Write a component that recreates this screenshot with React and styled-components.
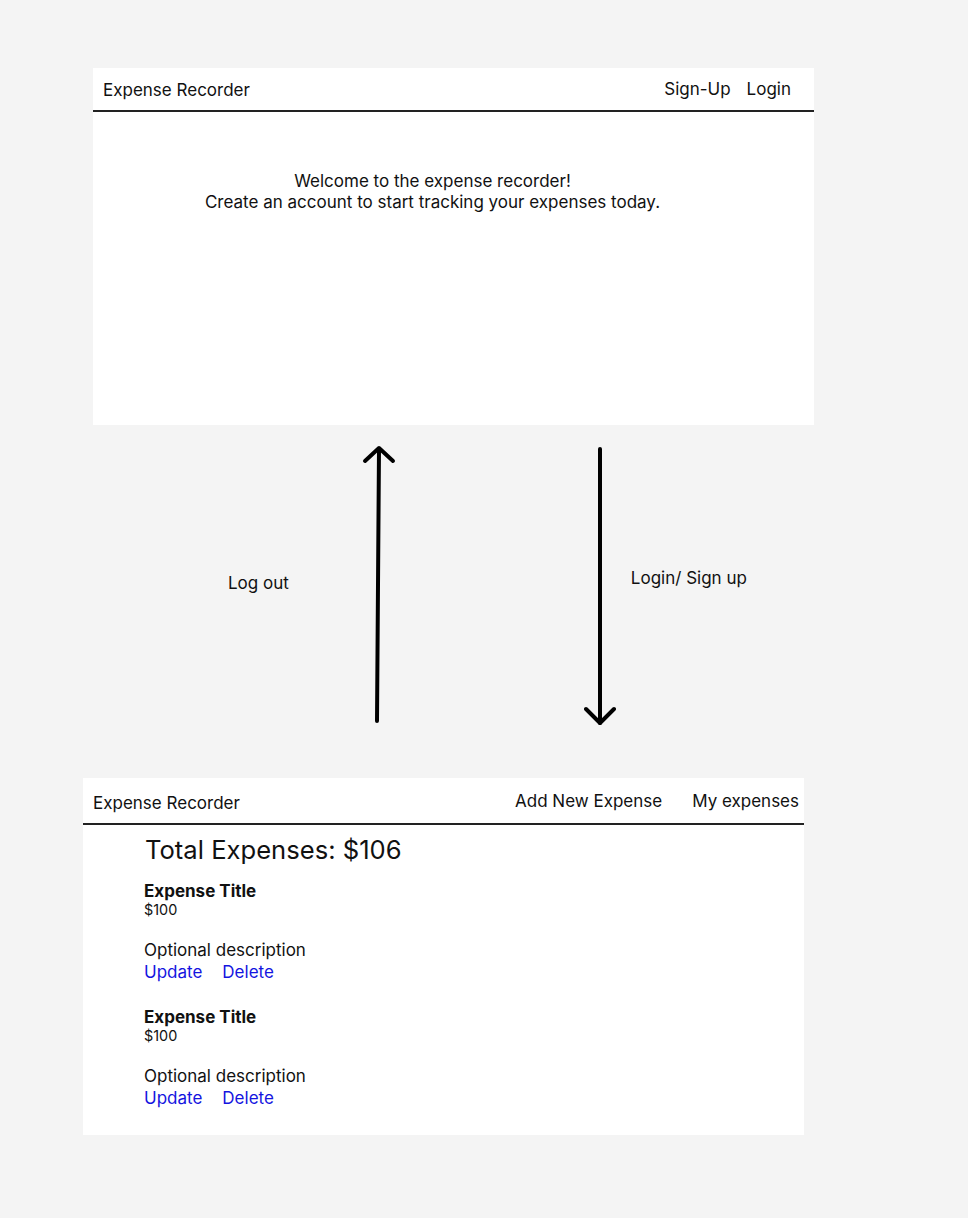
import React from "react";
import styled, { createGlobalStyle } from "styled-components";

const Global = createGlobalStyle`
  html, body { margin: 0; padding: 0; background: #f4f4f4; }
  body { font-family: Inter, "Noto Sans", sans-serif; color: #111; }
`;

const Page = styled.div`
  display: flex;
  flex-direction: column;
  width: 968px;
  min-height: 1218px;
  padding-top: 68px;
  box-sizing: border-box;
`;

const Card = styled.section`
  background: #fff;
  width: 721px;
  height: 357px;
  margin-left: ${(p) => p.$left}px;
  display: flex;
  flex-direction: column;
`;

const NavBar = styled.header`
  height: ${(p) => p.$h}px;
  border-bottom: 2px solid #222;
  display: flex;
  align-items: center;
  justify-content: space-between;
  padding: 0 ${(p) => p.$pr}px 0 10px;
  box-sizing: content-box;
  font-size: 17px;
  line-height: 21px;
`;

const Brand = styled.span`
  padding-top: ${(p) => p.$dy || 0}px;
`;

const NavLinks = styled.nav`
  display: flex;
  gap: ${(p) => p.$gap}px;
  padding-top: ${(p) => p.$dy || 0}px;
`;

const NavLink = styled.span``;

const Welcome = styled.div`
  padding: 59px 42px 0 0;
  text-align: center;
  font-size: 17px;
  line-height: 21px;
`;

const Transition = styled.div`
  height: 353px;
  display: flex;
  align-items: flex-start;
`;

const FlowLabel = styled.span`
  font-size: 17px;
  line-height: 20px;
  margin-top: ${(p) => p.$top}px;
  margin-left: ${(p) => p.$left}px;
`;

const ArrowSvg = styled.svg`
  display: block;
  margin-top: 20px;
  margin-left: ${(p) => p.$left}px;
  flex-shrink: 0;
`;

const Content = styled.div`
  padding: 9px 0 0 61px;
  display: flex;
  flex-direction: column;
`;

const Total = styled.h1`
  margin: 0 0 16px 1px;
  font-size: 25.6px;
  font-weight: 400;
  line-height: 32px;
`;

const Item = styled.article`
  display: flex;
  flex-direction: column;
  margin-bottom: 25px;
`;

const ItemTitle = styled.strong`
  font-size: 17px;
  font-weight: 700;
  line-height: 19px;
`;

const Amount = styled.span`
  font-size: 14.4px;
  line-height: 17px;
  margin-bottom: 22px;
`;

const Desc = styled.span`
  font-size: 17px;
  line-height: 21px;
`;

const Actions = styled.div`
  display: flex;
  gap: 20px;
  margin-top: 1px;
  font-size: 17px;
  line-height: 21px;
`;

const ActionLink = styled.span`
  color: #1414e0;
`;

function Arrow({ dir, left }) {
  const up = dir === "up";
  return (
    <ArrowSvg $left={left} width="34" height="282" viewBox="0 0 34 282">
      {up ? (
        <>
          <line x1="15" y1="276" x2="17" y2="4" stroke="#000" strokeWidth="4" strokeLinecap="round" />
          <polyline points="3,16 17,3 31,16" fill="none" stroke="#000" strokeWidth="4" strokeLinecap="round" strokeLinejoin="round" />
        </>
      ) : (
        <>
          <line x1="16" y1="4" x2="16" y2="278" stroke="#000" strokeWidth="4" strokeLinecap="round" />
          <polyline points="2,264 16,278 30,264" fill="none" stroke="#000" strokeWidth="4" strokeLinecap="round" strokeLinejoin="round" />
        </>
      )}
    </ArrowSvg>
  );
}

const expenses = [
  { title: "Expense Title", amount: "$100", desc: "Optional description" },
  { title: "Expense Title", amount: "$100", desc: "Optional description" },
];

export default function App() {
  return (
    <>
      <Global />
      <Page>
        <Card $left={93}>
          <NavBar $h={42} $pr={23}>
            <Brand $dy={2}>Expense Recorder</Brand>
            <NavLinks $gap={16}>
              <NavLink>Sign-Up</NavLink>
              <NavLink>Login</NavLink>
            </NavLinks>
          </NavBar>
          <Welcome>
            Welcome to the expense recorder!
            <br />
            Create an account to start tracking your expenses today.
          </Welcome>
        </Card>
        <Transition>
          <FlowLabel $left={228} $top={148}>Log out</FlowLabel>
          <Arrow dir="up" left={73} />
          <Arrow dir="down" left={188} />
          <FlowLabel $left={13} $top={143}>Login/ Sign up</FlowLabel>
        </Transition>
        <Card $left={83}>
          <NavBar $h={45} $pr={5}>
            <Brand $dy={5}>Expense Recorder</Brand>
            <NavLinks $gap={30} $dy={2}>
              <NavLink>Add New Expense</NavLink>
              <NavLink>My expenses</NavLink>
            </NavLinks>
          </NavBar>
          <Content>
            <Total>Total Expenses: $106</Total>
            {expenses.map((e, i) => (
              <Item key={i}>
                <ItemTitle>{e.title}</ItemTitle>
                <Amount>{e.amount}</Amount>
                <Desc>{e.desc}</Desc>
                <Actions>
                  <ActionLink>Update</ActionLink>
                  <ActionLink>Delete</ActionLink>
                </Actions>
              </Item>
            ))}
          </Content>
        </Card>
      </Page>
    </>
  );
}
